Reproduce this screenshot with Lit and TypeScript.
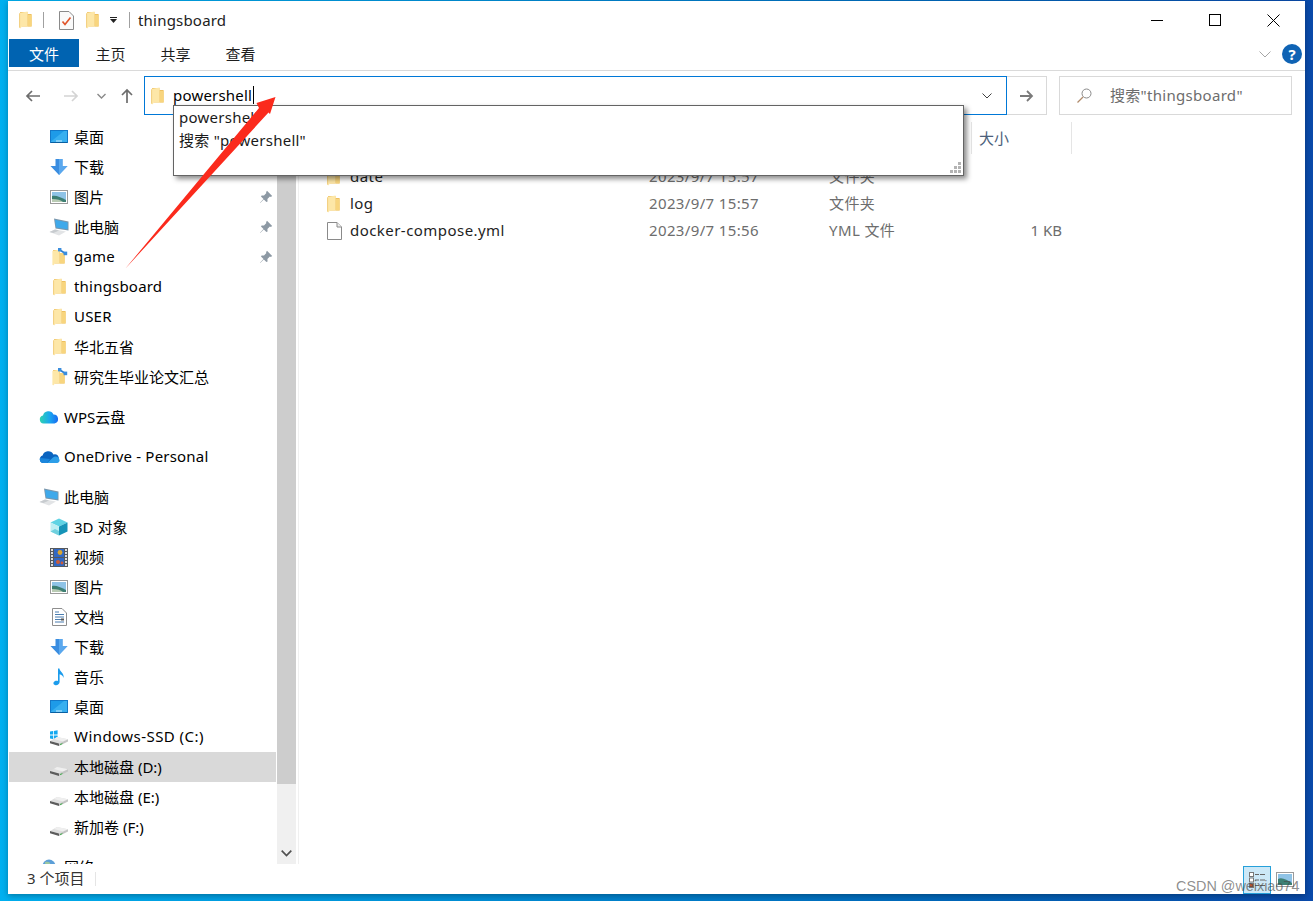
import { LitElement, html, css, svg } from "lit";
import { customElement } from "lit/decorators.js";

const folder = (w = 13, h = 18) => html`<svg class="ic" width=${w} height=${h} viewBox="0 0 13 18">
  <path d="M1 1 H8.5 V3 H12.6 V15.4 H3Z" fill="#eec060"/>
  <path d="M9 4 H12.6 V15.4 H9Z" fill="#f8d57e"/>
  <path d="M.4 2 8.6 .6 V15.4 H3 L1.2 17.6 .4 16.8Z" fill="#fde7a8"/>
  <path d="M.6 2.4 V16.6" stroke="#eec468" stroke-width=".8"/>
</svg>`;

const sharedFolder = html`<svg class="ic" width="18" height="18" viewBox="0 0 18 18">
  <path d="M3 2 H10 V5 H14.6 V15.4 H5Z" fill="#eec060"/>
  <path d="M2.4 3 9.6 1.6 V15.4 H5 L3.2 17.6 2.4 16.8Z" fill="#fde7a8"/>
  <path d="M10 5 H14.6 V15.4 H10Z" fill="#f8d57e"/>
  <path d="M8.5 1 L16 6" stroke="#2f7fd0" stroke-width="1.6"/>
  <rect x="8" y="0" width="3.4" height="3.4" fill="#3b8ede"/><rect x="13.6" y="3.6" width="3.6" height="3.6" fill="#3b8ede"/>
</svg>`;

const desktop = html`<svg class="ic" width="18" height="14" viewBox="0 0 18 14">
  <rect x=".5" y=".5" width="17" height="12" fill="#1e9be8" stroke="#1478c8"/>
  <path d="M1 11.5 14 1 H17 V12 H1Z" fill="#39b0f0"/>
  <path d="M1 12.5 H17" stroke="#0a5f9f"/><path d="M6 11 H12" stroke="#c9ecff"/>
</svg>`;

const download = html`<svg class="ic" width="18" height="18" viewBox="0 0 18 18">
  <path d="M5.5 1 H12.5 V8 H17.5 L9 17 .5 8 H5.5Z" fill="#3a8de0"/>
  <path d="M9 1 H12.5 V8 H17.5 L9 17Z" fill="#5aa8ee"/>
</svg>`;

const picture = html`<svg class="ic" width="18" height="14" viewBox="0 0 18 14">
  <rect x=".5" y=".5" width="17" height="13" fill="#fff" stroke="#9a9a9a"/>
  <rect x="2" y="2" width="14" height="10" fill="#8fc3e6"/>
  <path d="M2 6 C6 5 10 7 16 10 V12 H2Z" fill="#3d7f73"/>
  <path d="M2 9 C7 9 11 10 13 12 H2Z" fill="#b9cbb4"/>
</svg>`;

const computer = html`<svg class="ic" width="20" height="18" viewBox="0 0 20 18">
  <path d="M5 .5 19.5 3.5 V12.5 L6.5 10.5Z" fill="#7a96ac"/>
  <path d="M6 1.8 18.6 4.4 V11.3 L7.2 9.5Z" fill="#3fa9ea"/>
  <path d="M.5 14 6 11.5 17 13.5 10 17.5Z" fill="#e2e4e6"/>
  <path d="M.5 14 6 11.5 10 12.4 4.5 15Z" fill="#c7cbcf"/>
</svg>`;

const pin = html`<svg class="pin" width="14" height="14" viewBox="0 0 14 14">
  <path d="M8 .8 13.2 6 11.8 7 10.9 6.6 8.4 9 8.6 11.4 7.4 12 4.8 9.4 1.2 13 1 12.8 4.5 9 2 6.6 2.6 5.4 5 5.6 7.4 3.1 7 2.2Z" fill="#8d99a4"/>
</svg>`;

const wps = html`<svg class="ic" width="20" height="16" viewBox="0 0 20 16">
  <defs><linearGradient id="w" x1="0" x2="1"><stop offset="0" stop-color="#2fd3b0"/><stop offset=".55" stop-color="#19a6f0"/><stop offset="1" stop-color="#1a6af0"/></linearGradient></defs>
  <path d="M4.5 14.5 A4 4 0 0 1 4 6.6 A5.5 5.5 0 0 1 14.4 5.6 A4.5 4.5 0 0 1 15.5 14.5Z" fill="url(#w)"/>
</svg>`;

const onedrive = html`<svg class="ic" width="21" height="14" viewBox="0 0 21 14">
  <path d="M4 13 A3.8 3.8 0 0 1 3.6 5.6 A5.8 5.8 0 0 1 14.4 4.6 A4.4 4.4 0 0 1 17 13Z" fill="#0a64c0"/>
  <path d="M8 13 14 7.4 A4 4 0 0 1 20.6 10 A3 3 0 0 1 18 13Z" fill="#2c9ee8"/>
  <path d="M4 13 A3.8 3.8 0 0 1 1 8 L11 9 8 13Z" fill="#1b86dc"/>
</svg>`;

const cube = html`<svg class="ic" width="18" height="18" viewBox="0 0 18 18">
  <path d="M9 .5 17.5 4.5 9 8.5 .5 4.5Z" fill="#5fd3e4"/>
  <path d="M.5 4.5 9 8.5 V17.5 L.5 13.5Z" fill="#bdeef3"/>
  <path d="M17.5 4.5 9 8.5 V17.5 L17.5 13.5Z" fill="#1694b8"/>
  <path d="M.5 13.5 5 11 9 13 V17.5Z" fill="#6fd0de"/>
</svg>`;

const video = html`<svg class="ic" width="18" height="19" viewBox="0 0 18 19">
  <rect width="18" height="19" fill="#55595e"/>
  <rect x="4" y="1" width="10" height="8" fill="#3168c4"/><rect x="4" y="10" width="10" height="8" fill="#3168c4"/>
  <circle cx="10" cy="4.5" r="2.4" fill="#d9a531"/><circle cx="8" cy="14" r="2" fill="#cc5b38"/><circle cx="12" cy="15" r="1.4" fill="#cc5b38"/>
  ${[1, 4, 7, 10, 13, 16].map((y) => svg`<rect x="1" y=${y} width="2" height="2" fill="#ddd"/><rect x="15" y=${y} width="2" height="2" fill="#ddd"/>`)}
</svg>`;

const documentIc = html`<svg class="ic" width="15" height="18" viewBox="0 0 15 18">
  <path d="M.5 .5 H10 L14.5 5 V17.5 H.5Z" fill="#fff" stroke="#8e8e8e"/>
  <path d="M3 4H7M3 6.5H12M3 9H12M3 11.5H9M3 14H12" stroke="#4a7db0" stroke-width="1"/>
  <rect x="9" y="10.5" width="3" height="2" fill="#555"/>
</svg>`;

const music = html`<svg class="ic" width="14" height="18" viewBox="0 0 14 18">
  <path d="M6 .5 H7.4 C8 4 12.5 5 11.5 10 C11 7.5 9.5 6.8 7.6 6.2 V14 C7.6 16.4 4.8 17.8 2.8 17 C.8 16.2 1 14 3 13 C4 12.5 5.2 12.5 6 13Z" fill="#1c9cec"/>
</svg>`;

const drive = (win = false) => html`<svg class="ic" width="18" height="18" viewBox="0 0 18 18">
  ${win ? svg`<path d="M-.5 3.6 3 3 V6.6 H-.5Z M3.8 2.9 7.6 2.2 V6.6 H3.8Z M-.5 7.4 H3 V11 L-.5 10.4Z M3.8 7.4 H7.6 V11.8 L3.8 11.1Z" fill="#12a8f0"/>` : ""}
  <path d="M0 13 7 9 18 11.2 9 15.6Z" fill="#dedede"/>
  <path d="M4 11 7 9 18 11.2 13 13.6Z" fill="#efefef"/>
  <path d="M0 13 9 15.6 V18 L0 15.2Z" fill="#5c5c5c"/>
  <path d="M9 15.6 18 11.2 V13.6 L9 18Z" fill="#c4c4c4"/>
  <path d="M10 16.6 12.4 15.6" stroke="#3fae4a"/>
</svg>`;

const network = html`<svg class="ic" width="20" height="18" viewBox="0 0 20 18">
  <circle cx="10" cy="8" r="6.5" fill="#5c9fd8"/><path d="M6 4 C9 3 12 4 11 7 C9 9 6 8 6 4Z" fill="#9cc7a0"/>
  <path d="M0 8 L3 7 V9Z" fill="#999"/>
</svg>`;

const fileIc = html`<svg class="ic" width="15" height="18" viewBox="0 0 15 18">
  <path d="M.5 .5 H10 L14.5 5 V17.5 H.5Z" fill="#fff" stroke="#8a8a8a"/>
  <path d="M10 .5 V5 H14.5" fill="#eee" stroke="#8a8a8a"/>
</svg>`;

const titleDoc = html`<svg class="ic" width="15" height="19" viewBox="0 0 15 19">
  <path d="M.5 .5 H10 L14.5 5 V18.5 H.5Z" fill="#fafafa" stroke="#8a8a8a"/>
  <path d="M3.5 10.5 6 13.5 11.5 6.5" stroke="#e0552b" stroke-width="1.7" fill="none"/>
</svg>`;

type Row = { icon: unknown; label: string; lvl?: number; gap?: boolean; pin?: boolean; sel?: boolean; wide?: boolean };

const rows: Row[] = [
  { icon: desktop, label: "桌面" },
  { icon: download, label: "下载" },
  { icon: picture, label: "图片", pin: true },
  { icon: computer, label: "此电脑", pin: true },
  { icon: sharedFolder, label: "game", pin: true },
  { icon: folder(), label: "thingsboard" },
  { icon: folder(), label: "USER" },
  { icon: folder(), label: "华北五省" },
  { icon: sharedFolder, label: "研究生毕业论文汇总" },
  { icon: wps, label: "WPS云盘", lvl: 0, gap: true },
  { icon: onedrive, label: "OneDrive - Personal", lvl: 0, gap: true },
  { icon: computer, label: "此电脑", lvl: 0, gap: true },
  { icon: cube, label: "3D 对象" },
  { icon: video, label: "视频" },
  { icon: picture, label: "图片" },
  { icon: documentIc, label: "文档" },
  { icon: download, label: "下载" },
  { icon: music, label: "音乐" },
  { icon: desktop, label: "桌面" },
  { icon: drive(true), label: "Windows-SSD (C:)", wide: true },
  { icon: drive(), label: "本地磁盘 (D:)", sel: true },
  { icon: drive(), label: "本地磁盘 (E:)" },
  { icon: drive(), label: "新加卷 (F:)" },
  { icon: network, label: "网络", lvl: 0, gap: true },
];

const files = [
  { icon: folder(), name: "date", date: "2023/9/7 15:57", type: "文件夹", size: "" },
  { icon: folder(), name: "log", date: "2023/9/7 15:57", type: "文件夹", size: "" },
  { icon: fileIc, name: "docker-compose.yml", date: "2023/9/7 15:56", type: "YML 文件", size: "1 KB" },
];

const isLatin = (s: string) => /^[\x00-\x7f]+$/.test(s);

@customElement("app-root")
export class AppRoot extends LitElement {
  static styles = css`
    :host {
      display: block;
      position: relative;
      width: 1313px;
      height: 901px;
      overflow: hidden;
      box-sizing: border-box;
      padding: 1px 8px 7px;
      background: linear-gradient(90deg, #00b0f0 0%, #0090d8 35%, #006abc 70%, #0a4aaa 100%);
      font: 15px "Noto Sans", "Noto Sans CJK SC", sans-serif;
      color: #000;
    }
    .win { height: 100%; background: #fff; display: flex; flex-direction: column; box-shadow: 0 2px 6px rgba(0,0,0,.3); }
    .ic { display: block; flex: none; }
    .lt { letter-spacing: .2px; }
    .lab { margin-bottom: 2px; }

    .title { height: 38px; flex: none; display: flex; align-items: center; padding-left: 11px; color: #222; }
    .vsep { width: 1px; height: 16px; background: #a0a0a0; margin: 0 15px 0 11px; }
    .dd { margin: 0 12px 0 11px; width: 7px; height: 6px; }
    .vsep2 { width: 1px; height: 16px; background: #a0a0a0; margin-right: 8px; }
    .ttext { flex: 1; }
    .wc { width: 58px; height: 24px; display: flex; align-items: center; justify-content: center; }
    .wc.close { width: 59px; margin-right: 2px; }
    .gapd { width: 12px; flex: none; }

    .tabs { height: 31px; flex: none; display: flex; align-items: flex-start; border-bottom: 1px solid #dadada; padding-left: 1px; position: relative; }
    .tab { width: 65px; height: 28px; display: flex; align-items: center; justify-content: center; color: #1e1e1e; }
    .tab.file { width: 70px; background: #0063b1; color: #fff; margin-right: -1px; }
    .tabs .grow { flex: 1; }
    .help { width: 20px; height: 20px; border-radius: 50%; background: #0f63b4; color: #fff; font-weight: 700; font-size: 15px; display: flex; align-items: center; justify-content: center; margin: 5px 3px 0 11px; line-height: 1; }
    .chev { margin-top: 12px; }

    .addr { height: 51px; flex: none; display: flex; align-items: flex-start; padding-top: 5px; box-sizing: border-box; }
    .nav-b { display: flex; align-items: center; height: 39px; flex: none; width: 136px; }
    .nav-b svg { flex: none; display: block; }
    .back { margin-left: 17px; }
    .fwd { margin-left: 24px; }
    .rec { margin-left: 18px; }
    .up { margin-left: 15px; }
    .box { height: 39px; box-sizing: border-box; border: 1px solid #d9d9d9; display: flex; align-items: center; }
    .path { width: 863px; border-color: #0078d7; padding-left: 6px; position: relative; }
    .path .t { margin: 0 0 2px 9px; line-height: 20px; border-right: 1px solid #000; height: 18px; display: flex; align-items: center; padding-right: 1px; }
    .path .c { position: absolute; right: 14px; top: 16px; }
    .go { width: 40px; border-left: none; justify-content: center; }
    .search { width: 233px; margin-left: 12px; color: #6d6d6d; padding-left: 17px; gap: 18px; }
    .search span { letter-spacing: .3px; margin-bottom: 2px; }

    .main { flex: 1; display: flex; min-height: 0; }
    .side { width: 268px; flex: none; overflow: hidden; padding-left: 1px; box-sizing: border-box; }
    .row { height: 30px; display: flex; align-items: center; width: 267px; position: relative; box-sizing: border-box; padding-left: 41px; color: #000; white-space: nowrap; }
    .row.l0 { padding-left: 31px; }
    .row.gap { margin-top: 10px; }
    .row.sel { background: #d9d9d9; }
    .row .slot { width: 18px; display: flex; justify-content: center; margin-right: 6px; flex: none; }
    .row .wide { letter-spacing: .45px; }
    .pin { margin-left: auto; margin-right: 3px; display: block; }

    .sb { width: 19px; flex: none; margin-left: 1px; background: #f0f0f0; display: flex; flex-direction: column; }
    .sb .thumb { height: 662px; background: #cdcdcd; }
    .sb .sp { flex: 1; }
    .sb .dn { height: 22px; display: flex; align-items: center; justify-content: center; }

    .list { flex: 1; border-left: 1px solid #f0f0f0; margin-left: 2px; color: #6d6d6d; min-width: 0; }
    .hdr, .f { display: grid; grid-template-columns: 350px 180px 142px 1fr; }
    .hdr { height: 32px; color: #4c607a; align-items: center; }
    .hdr > div { height: 32px; display: flex; align-items: center; box-sizing: border-box; padding-bottom: 1px; }
    .hdr .n { padding-left: 51px; }
    .hdr .s { border-left: 1px solid #e5e5e5; border-right: 1px solid #e5e5e5; width: 101px; padding-left: 7px; }
    .body { padding-top: 9px; }
    .f { height: 27px; align-items: center; }
    .f > div { margin-bottom: 2px; }
    .f .n { display: flex; align-items: center; padding-left: 28px; color: #1e1e1e; margin-bottom: 0; }
    .f .slot { width: 15px; margin-right: 8px; flex: none; }
    .f .n .nm { letter-spacing: .45px; margin-bottom: 2px; }
    .f .dt { letter-spacing: .36px; }
    .f .ty { letter-spacing: .4px; }
    .f .sz { width: 91px; text-align: right; }

    .status { height: 30px; flex: none; display: flex; align-items: center; color: #333; padding-left: 19px; position: relative; }
    .status .lbl { margin-bottom: 3px; }
    .status .sep { width: 1px; height: 14px; background: #e5e5e5; margin-left: 11px; }
    .status .grow { flex: 1; }
    .vb { width: 28px; height: 28px; box-sizing: border-box; border: 1px solid #26a0da; background: #cce8f7; display: flex; align-items: center; justify-content: center; margin-bottom: -1px; }
    .vl { margin: 0 11px 0 5px; }

    .pop { position: absolute; left: 173px; top: 105px; width: 791px; height: 71px; box-sizing: border-box; background: #fff; border: 1px solid #646464; box-shadow: 3px 3px 5px rgba(0,0,0,.45); padding: 0 0 0 5px; color: #1a1a1a; }
    .pop div { display: flex; align-items: center; letter-spacing: .25px; padding-bottom: 2px; height: 21px; }
    .grip { position: absolute; right: 1px; bottom: 1px; display: block; }
    .arrow { position: absolute; left: 0; top: 0; pointer-events: none; }
    .wm { position: absolute; left: 1176px; top: 878px; font: 14.4px "Liberation Sans", Arial, sans-serif; color: rgba(70,70,70,.62); white-space: nowrap; }
  `;

  render() {
    return html`
      <div class="win">
        <div class="title">
          ${folder()}
          <div class="vsep"></div>
          ${titleDoc}
          <span class="gapd"></span>
          ${folder()}
          <svg class="dd" viewBox="0 0 7 6"><path d="M0 0H7V1H0Z M0 2H7L3.5 6Z" fill="#222"/></svg>
          <div class="vsep2"></div>
          <div class="ttext lt">thingsboard</div>
          <div class="wc"><svg width="12" height="12" viewBox="0 0 12 12"><path d="M0 6.5H12" stroke="#000"/></svg></div>
          <div class="wc"><svg width="12" height="12" viewBox="0 0 12 12"><rect x=".5" y=".5" width="11" height="11" fill="none" stroke="#000"/></svg></div>
          <div class="wc close"><svg width="13" height="13" viewBox="0 0 13 13"><path d="M.5 .5 12.5 12.5M12.5 .5 .5 12.5" stroke="#000"/></svg></div>
        </div>
        <div class="tabs">
          <div class="tab file">文件</div>
          <div class="tab">主页</div>
          <div class="tab">共享</div>
          <div class="tab">查看</div>
          <div class="grow"></div>
          <svg class="chev" width="12" height="7" viewBox="0 0 12 7"><path d="M.5 .5 6 6 11.5 .5" fill="none" stroke="#a6a6a6"/></svg>
          <div class="help">?</div>
        </div>
        <div class="addr">
          <div class="nav-b">
            <svg class="back" width="15" height="12" viewBox="0 0 15 12"><path d="M15 6H2M7 1 2 6 7 11" fill="none" stroke="#6d6d6d" stroke-width="1.7"/></svg>
            <svg class="fwd" width="15" height="12" viewBox="0 0 15 12"><path d="M0 6H13M8 1 13 6 8 11" fill="none" stroke="#d4d4d4" stroke-width="1.7"/></svg>
            <svg class="rec" width="9" height="6" viewBox="0 0 9 6"><path d="M.5 1 4.5 5 8.5 1" fill="none" stroke="#8a8a8a" stroke-width="1.4"/></svg>
            <svg class="up" width="12" height="15" viewBox="0 0 12 15"><path d="M6 15V2M1 7 6 2 11 7" fill="none" stroke="#6d6d6d" stroke-width="1.7"/></svg>
          </div>
          <div class="box path">
            ${folder()}
            <span class="t lt">powershell</span>
            <svg class="c" width="10" height="6" viewBox="0 0 10 6"><path d="M.5 .5 5 5 9.5 .5" fill="none" stroke="#404040"/></svg>
          </div>
          <div class="box go"><svg width="14" height="12" viewBox="0 0 14 12"><path d="M0 6H12M7 1 12 6 7 11" fill="none" stroke="#7a7a7a" stroke-width="1.8"/></svg></div>
          <div class="box search">
            <svg width="15" height="15" viewBox="0 0 15 15"><circle cx="9.5" cy="5.5" r="4.5" fill="none" stroke="#8a8a8a"/><path d="M6 9 .5 14.5" stroke="#b08a6a" stroke-width="1.2"/></svg>
            <span>搜索"thingsboard"</span>
          </div>
        </div>
        <div class="main">
          <div class="side">
            ${rows.map(
              (r) => html`<div class="row ${r.lvl === 0 ? "l0" : ""} ${r.gap ? "gap" : ""} ${r.sel ? "sel" : ""}">
                <span class="slot">${r.icon}</span><span class="lab ${r.wide ? "wide" : isLatin(r.label) ? "lt" : ""}">${r.label}</span>${r.pin ? pin : ""}
              </div>`
            )}
          </div>
          <div class="sb">
            <div class="thumb"></div>
            <div class="sp"></div>
            <div class="dn"><svg width="11" height="7" viewBox="0 0 11 7"><path d="M.7 .7 5.5 5.5 10.3 .7" fill="none" stroke="#505050" stroke-width="1.7"/></svg></div>
          </div>
          <div class="list">
            <div class="hdr">
              <div class="n">名称</div><div>修改日期</div><div>类型</div><div class="s">大小</div>
            </div>
            <div class="body">
              ${files.map(
                (f) => html`<div class="f">
                  <div class="n"><span class="slot">${f.icon}</span><span class="nm">${f.name}</span></div>
                  <div class="dt">${f.date}</div><div class="ty">${f.type}</div><div class="sz">${f.size}</div>
                </div>`
              )}
            </div>
          </div>
        </div>
        <div class="status">
          <span class="lbl">3 个项目</span><span class="sep"></span><span class="grow"></span>
          <div class="vb"><svg width="16" height="16" viewBox="0 0 16 16">
            <rect x=".5" y=".5" width="4" height="4" fill="#fff" stroke="#777"/><rect x=".5" y="6" width="4" height="4" fill="#fff" stroke="#777"/><rect x=".5" y="11.5" width="4" height="4" fill="#c0552b" stroke="#777"/>
            <path d="M6 2.5H10M11 2.5H16M6 8H10M11 8H16M6 13.5H10M11 13.5H16" stroke="#666"/></svg></div>
          <svg class="vl" width="18" height="15" viewBox="0 0 18 15"><rect x=".5" y=".5" width="17" height="14" fill="#fff" stroke="#9a9a9a"/><rect x="2" y="2" width="14" height="11" fill="#8fc3e6"/><path d="M2 7 C6 5 11 8 16 11 V13 H2Z" fill="#3d7f73"/></svg>
        </div>
      </div>

      <div class="pop">
        <div>powershell</div>
        <div>搜索 "powershell"</div>
        <svg class="grip" width="12" height="12" viewBox="0 0 12 12" fill="#b4b4b4"><rect x="8" y="0" width="3" height="3"/><rect x="4" y="4" width="3" height="3"/><rect x="8" y="4" width="3" height="3"/><rect x="0" y="8" width="3" height="3"/><rect x="4" y="8" width="3" height="3"/><rect x="8" y="8" width="3" height="3"/></svg>
      </div>
      <svg class="arrow" width="1313" height="901" viewBox="0 0 1313 901">
        <path d="M125 269 259 108 256.5 103 275.5 97 270 114 268.5 112.5Z" fill="#fb2a1c"/>
      </svg>
      <div class="wm">CSDN @weixiao74</div>
    `;
  }
}
